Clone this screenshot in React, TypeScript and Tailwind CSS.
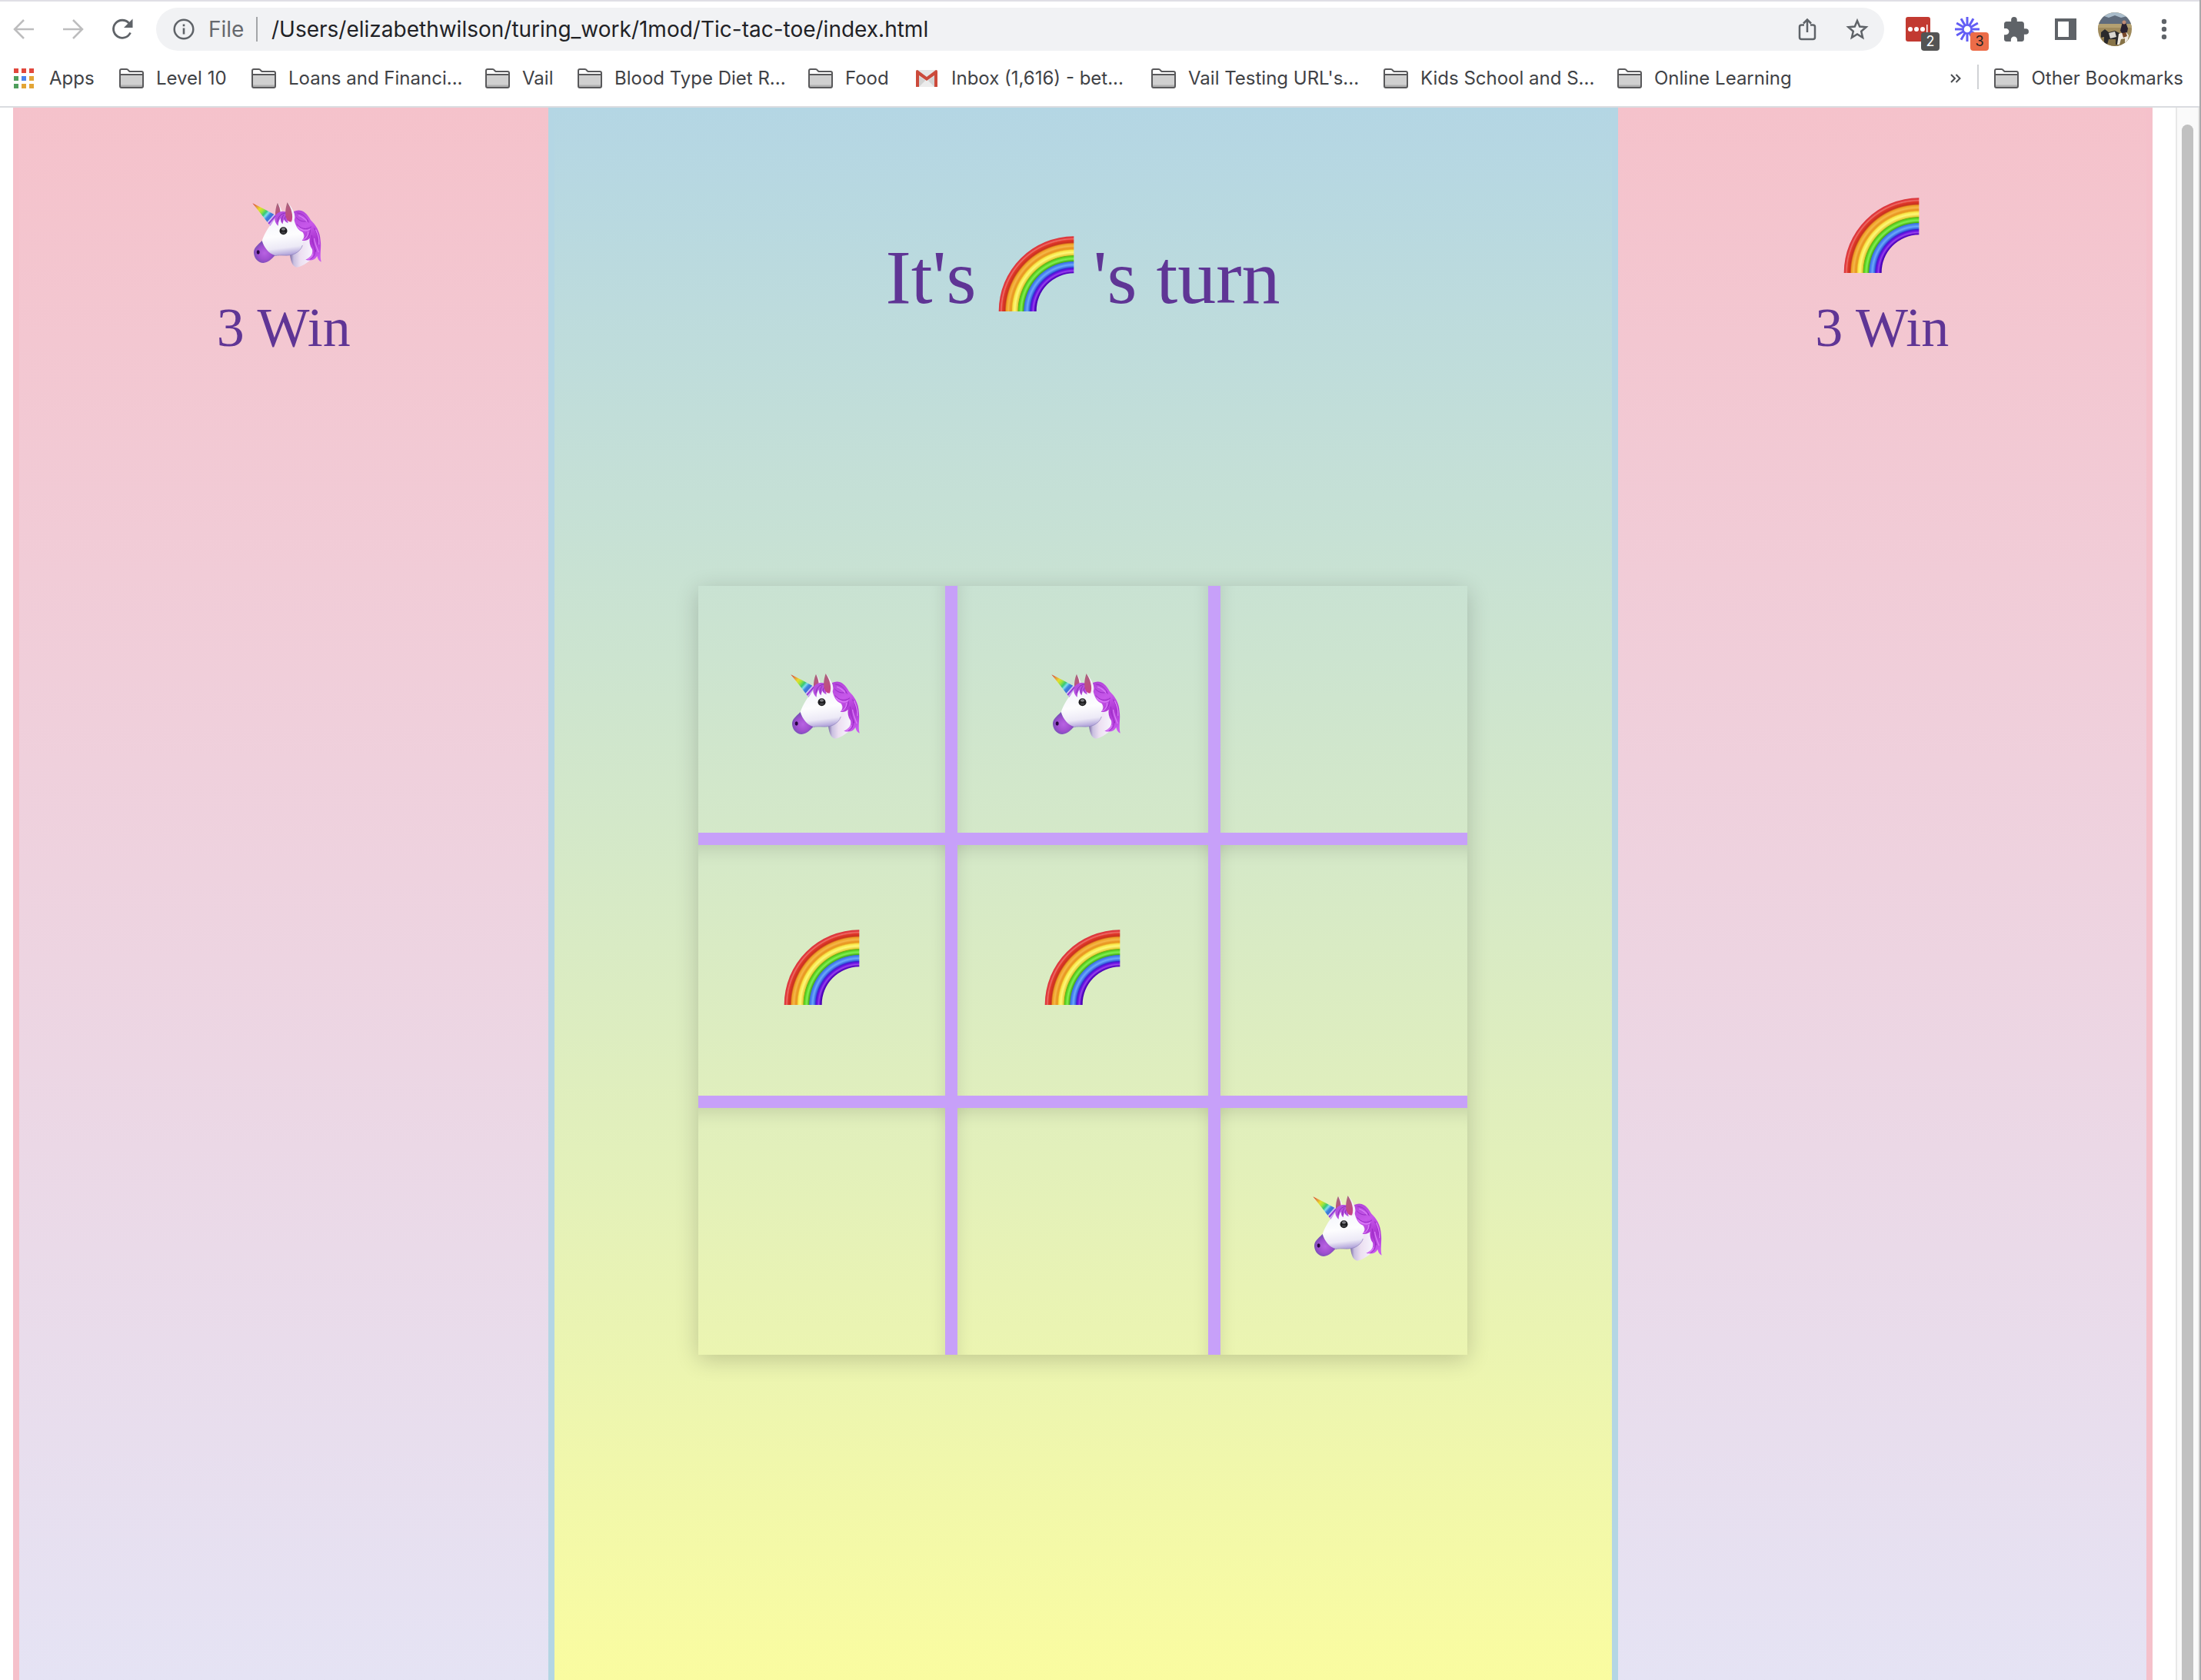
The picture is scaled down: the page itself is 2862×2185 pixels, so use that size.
import type { ReactNode } from "react";

type Mark = "unicorn" | "rainbow" | null;

function SharedGradients() {
  return (
    <svg className="absolute h-0 w-0" aria-hidden="true">
      <defs>
        <radialGradient id="rainbow-bands" gradientUnits="userSpaceOnUse" cx="467" cy="374" r="293">
          <stop offset="0.5" stopColor="#3b00a4" />
          <stop offset="0.52" stopColor="#5a06c8" />
          <stop offset="0.54" stopColor="#9746ea" />
          <stop offset="0.56" stopColor="#6d0fe6" />
          <stop offset="0.58" stopColor="#3d22cf" />
          <stop offset="0.59" stopColor="#3763df" />
          <stop offset="0.62" stopColor="#6aa9fb" />
          <stop offset="0.65" stopColor="#447af0" />
          <stop offset="0.662" stopColor="#3f74cf" />
          <stop offset="0.67" stopColor="#45b012" />
          <stop offset="0.7" stopColor="#83f052" />
          <stop offset="0.73" stopColor="#55d01c" />
          <stop offset="0.742" stopColor="#6fae1c" />
          <stop offset="0.75" stopColor="#e6cb34" />
          <stop offset="0.785" stopColor="#fdf878" />
          <stop offset="0.815" stopColor="#f8e545" />
          <stop offset="0.828" stopColor="#e9a323" />
          <stop offset="0.845" stopColor="#ea9522" />
          <stop offset="0.87" stopColor="#f5b848" />
          <stop offset="0.9" stopColor="#ee9f24" />
          <stop offset="0.912" stopColor="#d0521f" />
          <stop offset="0.92" stopColor="#c9301f" />
          <stop offset="0.95" stopColor="#e2382c" />
          <stop offset="0.965" stopColor="#ec7168" />
          <stop offset="0.98" stopColor="#e33b40" />
          <stop offset="1" stopColor="#d5363c" />
        </radialGradient>
        <linearGradient id="horn" gradientUnits="userSpaceOnUse" x1="206" y1="105" x2="288" y2="178">
          <stop offset="0" stopColor="#d8402c" />
          <stop offset="0.14" stopColor="#e58a3c" />
          <stop offset="0.3" stopColor="#e6dc2c" />
          <stop offset="0.42" stopColor="#9ee43c" />
          <stop offset="0.54" stopColor="#35c878" />
          <stop offset="0.62" stopColor="#7fdcee" />
          <stop offset="0.7" stopColor="#3d86dc" />
          <stop offset="0.79" stopColor="#3f6fd8" />
          <stop offset="0.83" stopColor="#e0d4fa" />
          <stop offset="0.88" stopColor="#8423d2" />
          <stop offset="0.94" stopColor="#d9b8f6" />
          <stop offset="1" stopColor="#8a18d4" />
        </linearGradient>
        <linearGradient id="face" gradientUnits="userSpaceOnUse" x1="310" y1="150" x2="330" y2="308">
          <stop offset="0" stopColor="#f3f4fb" />
          <stop offset="0.5" stopColor="#fdfdfe" />
          <stop offset="0.8" stopColor="#ece9f6" />
          <stop offset="1" stopColor="#a99ad6" />
        </linearGradient>
        <linearGradient id="neck" gradientUnits="userSpaceOnUse" x1="352" y1="300" x2="430" y2="300">
          <stop offset="0" stopColor="#7f70a8" />
          <stop offset="0.18" stopColor="#c9bfe0" />
          <stop offset="0.5" stopColor="#ecdff1" />
          <stop offset="1" stopColor="#f5f1fb" />
        </linearGradient>
        <radialGradient id="muzzle" gradientUnits="userSpaceOnUse" cx="252" cy="296" r="44">
          <stop offset="0" stopColor="#b862e2" />
          <stop offset="0.6" stopColor="#a04fd0" />
          <stop offset="1" stopColor="#7550b4" />
        </radialGradient>
        <linearGradient id="mane" gradientUnits="userSpaceOnUse" x1="370" y1="130" x2="460" y2="320">
          <stop offset="0" stopColor="#b044d8" />
          <stop offset="0.35" stopColor="#c758ea" />
          <stop offset="0.65" stopColor="#ac35d2" />
          <stop offset="1" stopColor="#c95af0" />
        </linearGradient>
        <linearGradient id="ear" gradientUnits="userSpaceOnUse" x1="340" y1="100" x2="352" y2="175">
          <stop offset="0" stopColor="#a8667c" />
          <stop offset="0.5" stopColor="#bb5280" />
          <stop offset="1" stopColor="#c83f86" />
        </linearGradient>
      </defs>
    </svg>
  );
}

function Rainbow() {
  return (
    <svg viewBox="172 77 300 300" className="size-[100px] shrink-0" role="img" aria-label="Rainbow">
      <path d="M174 374A293 293 0 0 1 467 81V225A147 147 0 0 0 321 374Z" fill="url(#rainbow-bands)" />
    </svg>
  );
}

function Unicorn() {
  return (
    <svg viewBox="177 77 300 300" className="size-[100px] shrink-0" role="img" aria-label="Unicorn">
      <path d="M350 290C352 325 360 350 378 352C402 350 430 325 444 312C450 270 430 220 395 200Z" fill="url(#neck)" />
      <path d="M303 99C311 110 318 125 322 142L300 152C308 130 305 115 303 99Z" fill="#f2eef6" />
      <path d="M303 100C296 116 293 134 294 152L314 142C314 126 309 112 303 100Z" fill="url(#ear)" />
      <path
        d="M276 186C262 204 248 228 242 250C255 285 272 300 292 307C315 300 345 312 370 299C395 285 405 262 404 235C402 200 392 160 372 146C345 138 310 142 290 168Z"
        fill="url(#face)"
      />
      <path
        d="M242 248C225 266 209 276 210 296C212 320 228 334 247 335C268 334 280 318 293 306C268 298 250 275 242 248Z"
        fill="url(#muzzle)"
      />
      <path d="M293 307C315 301 345 311 370 299C385 291 395 282 400 266" fill="none" stroke="#8d80bd" strokeWidth="3" opacity=".7" />
      <ellipse cx="227" cy="293" rx="6" ry="8" fill="#25063f" />
      <path d="M205 102Q250 124 297 150C290 164 284 178 274 190Q240 146 205 102Z" fill="url(#horn)" />
      <path
        d="M366 134C392 122 414 134 432 168C452 186 468 212 470 246C475 276 466 300 473 331C463 326 459 318 457 308C449 324 432 328 412 322C434 314 442 298 438 282C428 268 426 252 428 238C420 246 410 250 398 247C410 234 408 224 400 214C382 208 372 190 366 160Z"
        fill="url(#mane)"
      />
      <path
        d="M380 140C400 142 416 156 424 176M376 158C390 174 408 176 422 170M378 184C392 202 416 208 434 194M412 240C424 232 432 220 430 206M446 200C458 220 462 240 462 262M436 228C438 256 446 272 452 290M448 280C450 300 446 314 430 320"
        fill="none"
        stroke="#9a2cc6"
        strokeWidth="3"
        strokeLinecap="round"
      />
      <path
        d="M386 150C402 156 410 164 416 172M382 194C394 208 414 214 428 204M446 240C448 260 456 274 462 292M404 244C416 238 422 226 422 214M440 300C438 310 432 316 422 320M452 206C462 226 466 244 464 262"
        fill="none"
        stroke="#d97cf6"
        strokeWidth="4"
        strokeLinecap="round"
      />
      <path
        d="M352 140C330 130 302 132 294 152C289 168 294 180 305 190C305 178 308 168 314 160C314 170 316 178 323 183C324 176 325 170 329 165C331 172 335 177 344 180C340 166 346 154 352 140Z"
        fill="#b650de"
      />
      <path
        d="M334 140C316 142 304 154 303 174M340 148C332 154 329 162 332 170M326 148C320 156 318 166 321 174"
        fill="none"
        stroke="#8a2cba"
        strokeWidth="3"
        strokeLinecap="round"
      />
      <path d="M341 98C358 116 370 138 370 156C370 166 366 174 356 180L346 168Z" fill="#f3f0f8" />
      <path d="M341 98C334 118 331 142 336 158C340 170 348 177 357 174C366 152 356 120 341 98Z" fill="url(#ear)" />
      <circle cx="325.500" cy="210" r="15" fill="#1c1c1e" />
      <ellipse cx="325.500" cy="203" rx="8" ry="5" fill="#7d7d82" />
      <ellipse cx="325.500" cy="217" rx="9" ry="4" fill="#3f3f43" />
    </svg>
  );
}

function Token({ mark }: { mark: Mark }) {
  if (mark === "unicorn") return <Unicorn />;
  if (mark === "rainbow") return <Rainbow />;
  return null;
}

function Folder() {
  return (
    <svg viewBox="0 0 32 26" className="h-[26px] w-8 shrink-0" aria-hidden="true">
      <path d="M1 23V3Q1 1 3 1H9.500Q11 1 12 2.500L13.500 4H29Q31 4 31 6V23Q31 25 29 25H3Q1 25 1 23Z" fill="#fff" />
      <path d="M1 8H31V23Q31 25 29 25H3Q1 25 1 23Z" fill="#d0d0d0" />
      <path d="M2 21.500H30V24H2Z" fill="#b0b0b0" />
      <path
        d="M1 23V3Q1 1 3 1H9.500Q11 1 12 2.500L13.500 4H29Q31 4 31 6V23Q31 25 29 25H3Q1 25 1 23ZM1 8H31"
        fill="none"
        stroke="#59595b"
        strokeWidth="2"
      />
    </svg>
  );
}

function AppsGrid() {
  const colors = ["#e2483d", "#e2483d", "#e2483d", "#4f9e5c", "#4a84ee", "#e3a536", "#4f9e5c", "#e3a536", "#e3a536"];
  return (
    <svg viewBox="0 0 26 26" className="mr-1 size-[26px] shrink-0" aria-hidden="true">
      {colors.map((c, i) => (
        <rect key={i} x={(i % 3) * 10} y={Math.floor(i / 3) * 10} width="6" height="6" fill={c} />
      ))}
    </svg>
  );
}

function Gmail() {
  return (
    <svg viewBox="0 0 28 22" className="mx-0.5 h-[22px] w-7 shrink-0" aria-hidden="true">
      <rect width="28" height="22" rx="1" fill="#e6e6e6" />
      <path d="M4 8L14 15L24 8V22H4Z" fill="#d2d2d2" />
      <path d="M4 22L14 12L24 22Z" fill="#ececec" />
      <path d="M0 22V2Q0 0 2 0L14 9L26 0Q28 0 28 2V22H24V7L14 14L4 7V22Z" fill="#cb4a3b" />
    </svg>
  );
}

function BookmarkItem({ icon, label, width }: { icon?: ReactNode; label: string; width: string }) {
  return (
    <a href="#" className={`flex shrink-0 items-center gap-4 whitespace-nowrap ${width}`}>
      {icon ?? <Folder />}
      <span>{label}</span>
    </a>
  );
}

function AddressBar() {
  return (
    <div className="flex h-14 flex-1 items-center rounded-full bg-[#f1f2f4] pr-5 pl-[22px]">
      <svg viewBox="0 0 28 28" className="size-7 shrink-0" aria-hidden="true">
        <circle cx="14" cy="14" r="12.300" fill="none" stroke="#5f6368" strokeWidth="2.500" />
        <path d="M12.700 7.500H15.300V10.200H12.700ZM12.700 12.500H15.300V20.500H12.700Z" fill="#5f6368" />
      </svg>
      <label htmlFor="address" className="ml-[18px] w-[64px] border-r-2 border-[#a3a5a8] leading-8 text-[#66696e]">
        File
      </label>
      <input
        id="address"
        className="ml-[18px] min-w-0 flex-1 bg-transparent text-[#212226] outline-none"
        defaultValue="/Users/elizabethwilson/turing_work/1mod/Tic-tac-toe/index.html"
      />
      <button aria-label="Share" className="mr-[38px]">
        <svg viewBox="0 0 24 30" className="h-[30px] w-6" fill="none" stroke="#5f6368" strokeWidth="2.500">
          <path d="M8 9.500H4.500Q2 9.500 2 12V25.500Q2 28 4.500 28H19.500Q22 28 22 25.500V12Q22 9.500 19.500 9.500H16" />
          <path d="M12 19V2.500M7 7.500L12 2.500L17 7.500" />
        </svg>
      </button>
      <button aria-label="Bookmark this page">
        <svg viewBox="0 0 30 30" className="size-[30px]" fill="none" stroke="#5f6368" strokeWidth="2.500">
          <path d="M15 4L18.200 11.600L26.500 12.300L20.200 17.700L22.100 25.800L15 21.500L7.900 25.800L9.800 17.700L3.500 12.300L11.800 11.600Z" />
        </svg>
      </button>
    </div>
  );
}

function Extensions() {
  return (
    <div className="flex items-center">
      <button aria-label="Password manager" className="relative ml-7 size-8">
        <svg viewBox="0 0 32 32" className="size-8">
          <rect width="32" height="32" rx="3" fill="#c23a31" />
          <circle cx="6" cy="16" r="3" fill="#fff" />
          <circle cx="14" cy="16" r="3" fill="#fff" />
          <circle cx="22" cy="16" r="3" fill="#fff" />
          <rect x="27" y="10" width="1.500" height="12" fill="#fff" />
        </svg>
        <span className="absolute top-5 left-5 flex h-6 w-6 items-center justify-center rounded bg-[#545454] text-lg text-white">
          2
        </span>
      </button>
      <button aria-label="Screen recorder" className="relative ml-8 size-8">
        <svg viewBox="-16 -16 32 32" className="size-8" stroke="#625df5" strokeWidth="3">
          {[0, 30, 60, 90, 120, 150, 180, 210, 240, 270, 300, 330].map((a) => (
            <path key={a} d="M0 -5V-16" transform={`rotate(${a})`} />
          ))}
          <circle r="5.500" fill="#fff" strokeWidth="2.500" />
        </svg>
        <span className="absolute top-5 left-5 flex h-6 w-6 items-center justify-center rounded bg-[#ec6c48] text-lg text-[#222]">
          3
        </span>
      </button>
      <button aria-label="Extensions" className="ml-8">
        <svg viewBox="2 1 21 21" className="size-8" fill="#5f6368">
          <path d="M20.500 11H19V7c0-1.100-.9-2-2-2h-4V3.500a2.500 2.500 0 0 0-5 0V5H4c-1.100 0-1.990.9-1.990 2v3.800H3.500c1.490 0 2.700 1.210 2.700 2.700s-1.210 2.700-2.700 2.700H2V20c0 1.100.9 2 2 2h3.800v-1.500c0-1.490 1.210-2.700 2.700-2.700s2.700 1.210 2.700 2.700V22H17c1.100 0 2-.9 2-2v-4h1.500a2.500 2.500 0 0 0 0-5z" />
        </svg>
      </button>
      <button aria-label="Side panel" className="ml-[34px]">
        <svg viewBox="0 0 28 28" className="size-7" fill="#5f6368">
          <path d="M0 0H28V28H0ZM4 4V24H18V4Z" fillRule="evenodd" />
        </svg>
      </button>
      <button aria-label="Profile" className="ml-7">
        <svg viewBox="0 0 44 44" className="size-11">
          <defs>
            <clipPath id="avatar">
              <circle cx="22" cy="22" r="22" />
            </clipPath>
          </defs>
          <g clipPath="url(#avatar)">
            <rect width="44" height="44" fill="#9f8a5c" />
            <rect width="44" height="9" fill="#a9bccb" />
            <path d="M0 8L8 5L14 7L22 4L30 7L38 5L44 8V16H0Z" fill="#5f6b7c" />
            <path d="M0 15H44V20H0Z" fill="#b3a071" />
            <path d="M0 34H44V44H0Z" fill="#877348" />
            <path d="M4 26L9 22L14 26L22 24L28 27L30 34L27 42H23V35L14 35L12 42H8V32L4 33Z" fill="#2b2a2b" />
            <path d="M14 27L22 25L24 32L16 34Z" fill="#d9d6cf" />
            <path d="M27 28L36 25L40 30L38 40H35V34L30 35L28 42H25Z" fill="#efe9df" />
            <path d="M31 26L36 25L38 31L33 33Z" fill="#7a4a2c" />
            <path d="M31 16Q33 9 36 13L39 21L38 26L31 27L29 24Z" fill="#2a2230" />
            <circle cx="34" cy="13" r="2.500" fill="#c08c74" />
          </g>
        </svg>
      </button>
      <button aria-label="Menu" className="ml-9">
        <svg viewBox="0 0 12 28" className="h-7 w-3" fill="#5f6368">
          <circle cx="6" cy="4" r="3.200" />
          <circle cx="6" cy="14" r="3.200" />
          <circle cx="6" cy="24" r="3.200" />
        </svg>
      </button>
    </div>
  );
}

function BrowserChrome() {
  return (
    <header className="border-t-2 border-b-2 border-t-[#e0dfe5] border-b-[#dadce0] bg-white font-['Inter',sans-serif]">
      <div className="flex h-[72px] items-center pr-10 pl-[17px] text-[28px]">
        <button aria-label="Back" className="mr-9">
          <svg viewBox="0 0 28 28" className="size-7" fill="none" stroke="#bdbdbe" strokeWidth="2.500">
            <path d="M27 14H2.500M14 2L2 14L14 26" />
          </svg>
        </button>
        <button aria-label="Forward" className="mr-9">
          <svg viewBox="0 0 28 28" className="size-7" fill="none" stroke="#bdbdbe" strokeWidth="2.500">
            <path d="M1 14H25.500M14 2L26 14L14 26" />
          </svg>
        </button>
        <button aria-label="Reload" className="mr-[30px]">
          <svg viewBox="0 0 28 28" className="size-7">
            <path d="M24.500 18.500A11.500 11.500 0 1 1 22.500 6" fill="none" stroke="#5f6368" strokeWidth="2.800" />
            <path d="M27.500 0.500V12H16Z" fill="#5f6368" />
          </svg>
        </button>
        <AddressBar />
        <Extensions />
      </div>
      <nav aria-label="Bookmarks" className="flex h-16 items-start pt-2.5 pr-[21px] pl-[18px] text-[24px] leading-9 text-[#3f4246]">
        <BookmarkItem icon={<AppsGrid />} label="Apps" width="w-[137px]" />
        <BookmarkItem label="Level 10" width="w-[172px]" />
        <BookmarkItem label="Loans and Financi..." width="w-[304px]" />
        <BookmarkItem label="Vail" width="w-[120px]" />
        <BookmarkItem label="Blood Type Diet R..." width="w-[300px]" />
        <BookmarkItem label="Food" width="w-[138px]" />
        <BookmarkItem icon={<Gmail />} label="Inbox (1,616) - bet..." width="w-[308px]" />
        <BookmarkItem label="Vail Testing URL's..." width="w-[302px]" />
        <BookmarkItem label="Kids School and S..." width="w-[304px]" />
        <BookmarkItem label="Online Learning" width="w-[240px]" />
        <button aria-label="More bookmarks" className="ml-auto flex h-9 items-center">
          <svg viewBox="0 0 14 12" className="h-3 w-3.5" fill="none" stroke="#4a4d51" strokeWidth="2">
            <path d="M1 1L6 6L1 11M7.500 1L12.500 6L7.500 11" />
          </svg>
        </button>
        <div className="ml-[21px] h-8 border-l-2 border-[#d0d2d5]" />
        <div className="ml-5">
          <BookmarkItem label="Other Bookmarks" width="w-auto" />
        </div>
      </nav>
    </header>
  );
}

function PlayerPanel({ mark, wins, side }: { mark: Mark; wins: string; side: string }) {
  return (
    <section
      className={`flex min-w-0 flex-1 flex-col items-center border-[#f5c1cb] bg-linear-to-b from-[#f5c2cb] to-[#e5e3f4] pt-[116px] ${side}`}
    >
      <Token mark={mark} />
      <p className="mt-[30px] text-[72px] leading-[80px]">{wins}</p>
    </section>
  );
}

const board: Mark[] = ["unicorn", "unicorn", null, "rainbow", "rainbow", null, null, null, "unicorn"];

const squareStyles = [
  "shadow-[inset_-22px_0_20px_-20px_rgba(0,0,0,0.09)]",
  "border-x-16 shadow-[inset_22px_0_20px_-20px_rgba(0,0,0,0.09),inset_-22px_0_20px_-20px_rgba(0,0,0,0.09)]",
  "shadow-[inset_22px_0_20px_-20px_rgba(0,0,0,0.09)]",
  "border-y-16 shadow-[inset_-22px_0_20px_-20px_rgba(0,0,0,0.09),inset_0_26px_22px_-20px_rgba(0,0,0,0.12)]",
  "border-16 shadow-[inset_22px_0_20px_-20px_rgba(0,0,0,0.09),inset_-22px_0_20px_-20px_rgba(0,0,0,0.09),inset_0_26px_22px_-20px_rgba(0,0,0,0.12)]",
  "border-y-16 shadow-[inset_22px_0_20px_-20px_rgba(0,0,0,0.09),inset_0_26px_22px_-20px_rgba(0,0,0,0.12)]",
  "shadow-[inset_-22px_0_20px_-20px_rgba(0,0,0,0.09),inset_0_26px_22px_-20px_rgba(0,0,0,0.12)]",
  "border-x-16 shadow-[inset_22px_0_20px_-20px_rgba(0,0,0,0.09),inset_-22px_0_20px_-20px_rgba(0,0,0,0.09),inset_0_26px_22px_-20px_rgba(0,0,0,0.12)]",
  "shadow-[inset_22px_0_20px_-20px_rgba(0,0,0,0.09),inset_0_26px_22px_-20px_rgba(0,0,0,0.12)]",
];

function Board() {
  return (
    <div className="grid grid-cols-[321px_358px_321px] grid-rows-[321px_358px_321px] shadow-[0_6px_28px_rgba(0,0,0,0.19)]">
      {board.map((mark, i) => (
        <button
          key={i}
          aria-label={`Square ${i + 1}`}
          className={`flex items-center justify-center border-[#c7a0f9] pb-2 ${squareStyles[i]}`}
        >
          <Token mark={mark} />
        </button>
      ))}
    </div>
  );
}

function Game() {
  return (
    <main className="mr-[30px] ml-[17px] flex min-w-0 flex-1 font-['Liberation_Serif',serif] text-[#5f3595]">
      <PlayerPanel mark="unicorn" wins="3 Win" side="border-l-8" />
      <section className="flex min-w-0 flex-[2] flex-col items-center border-x-8 border-[#b4d6e4] bg-linear-to-b from-[#b4d6e4] to-[#fafca0] pt-[166px]">
        <h1 className="flex text-[100px] leading-[110px]">
          <span>It's</span>
          <span className="mr-6 ml-7">
            <Rainbow />
          </span>
          <span>'s turn</span>
        </h1>
        <div className="mt-[346px]">
          <Board />
        </div>
      </section>
      <PlayerPanel mark="rainbow" wins="3 Win" side="border-r-8" />
    </main>
  );
}

export default function App() {
  return (
    <div className="flex h-screen flex-col overflow-hidden border-r-2 border-[#a9a9ab] bg-white">
      <SharedGradients />
      <BrowserChrome />
      <div className="flex min-h-0 flex-1">
        <Game />
        <div className="flex w-[31px] border-x-2 border-[#e8e8e8] bg-[#fafafa] px-1.5 pt-[22px]" aria-hidden="true">
          <div className="flex-1 rounded-t-full bg-[#c1c1c1]" />
        </div>
      </div>
    </div>
  );
}
